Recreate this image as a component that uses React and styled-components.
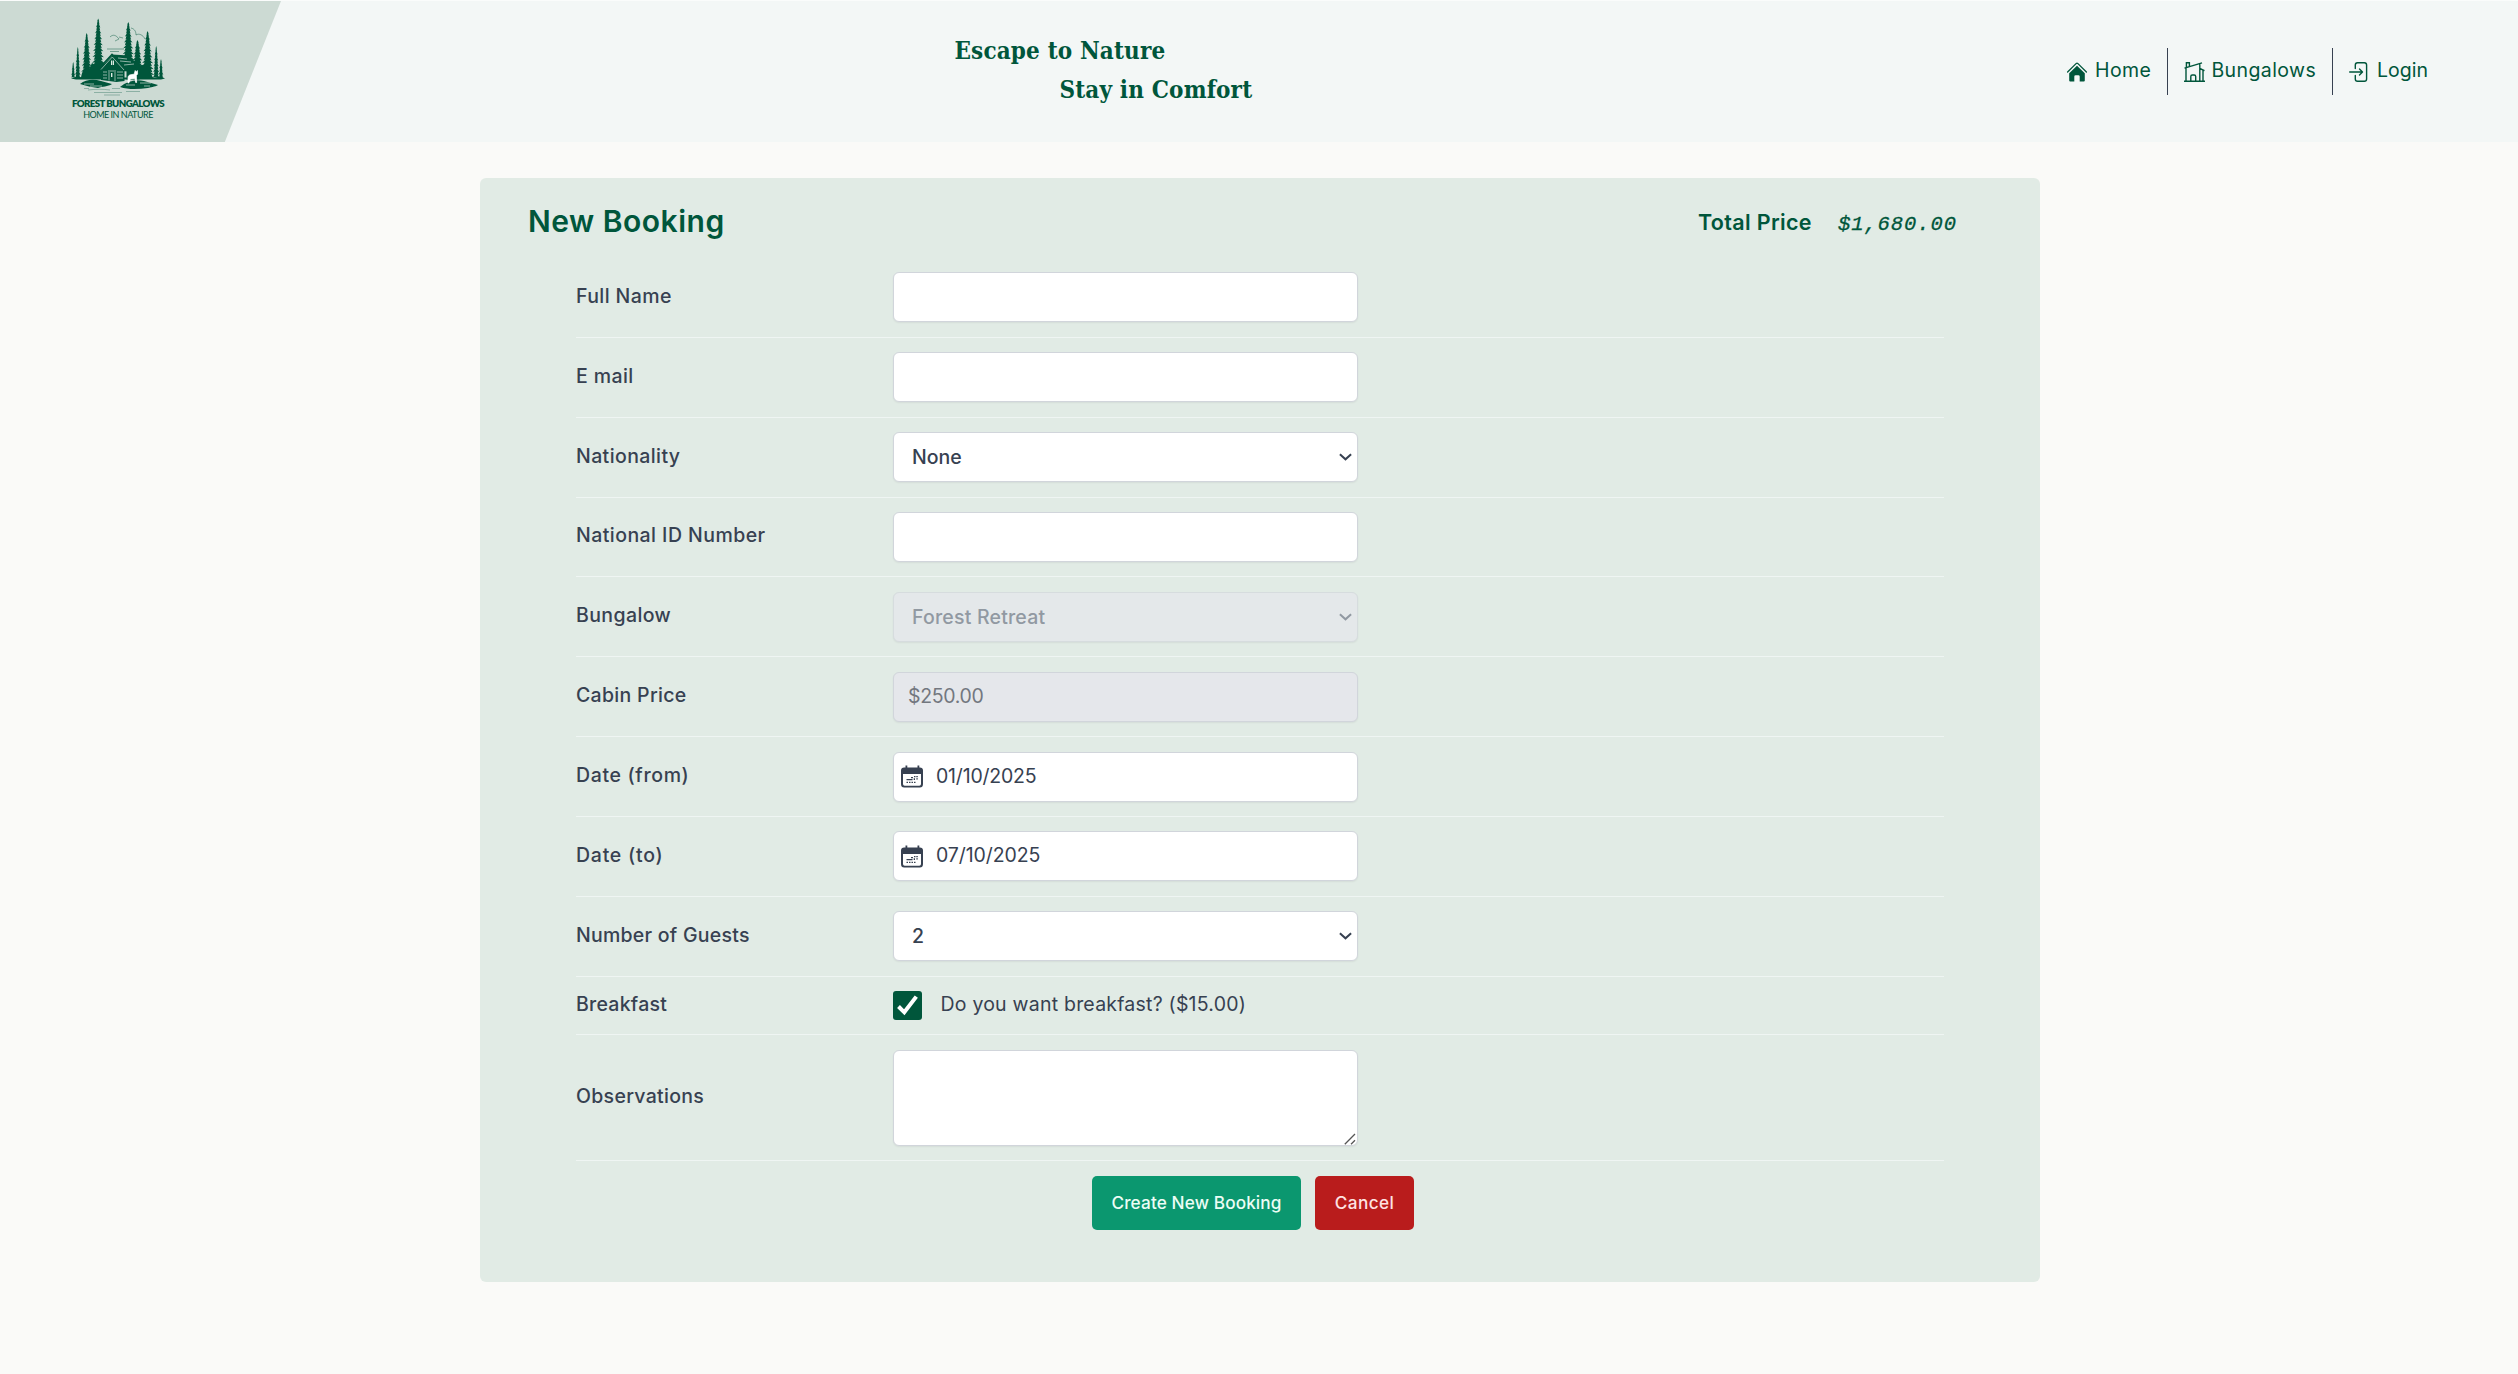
import React from "react";
import styled, { createGlobalStyle } from "styled-components";

const green = "#00563b";
const ink = "#374151";

const GlobalStyle = createGlobalStyle`
  *, *::before, *::after { box-sizing: border-box; }
  body {
    margin: 0;
    background: #fafaf8;
    color: ${ink};
    font-family: Inter, "Liberation Sans", sans-serif;
    font-size: 19.5px;
  }
  input, select, textarea, button { font-family: inherit; color: inherit; }
`;

const Page = styled.div`
  min-height: 1374px;
  display: flex;
  flex-direction: column;
`;

const Header = styled.header`
  height: 142px;
  border-top: 1px solid #fafcfb;
  background: #f3f7f6;
  display: grid;
  grid-template-columns: 281px 1fr auto;
`;

const Brand = styled.div`
  background: #ccdad3;
  clip-path: polygon(0 0, 100% 0, 80% 100%, 0 100%);
  padding: 13px 45px 0 0;
  display: flex;
  flex-direction: column;
  align-items: center;
  color: ${green};
  font-family: Lato, "Open Sans", sans-serif;
  white-space: nowrap;
`;

const BrandName = styled.div`
  margin-top: -1.5px;
  font-size: 9.7px;
  font-weight: 800;
  line-height: 12px;
  letter-spacing: -0.6px;
`;

const BrandTag = styled.div`
  font-size: 9px;
  line-height: 12px;
  letter-spacing: -0.5px;
`;

const Slogan = styled.div`
  padding: 30px 0 0 673px;
  color: ${green};
  font-family: "DejaVu Serif Condensed", "DejaVu Serif", serif;
  font-stretch: condensed;
  font-weight: 700;
  font-size: 24px;
  line-height: 39px;
  white-space: nowrap;
`;

const SloganLine = styled.div`
  padding-left: ${(p) => p.$indent}px;
  letter-spacing: 0.15px;
`;

const Nav = styled.nav`
  display: flex;
  align-items: center;
  padding: 0 90px 0 0;
  color: ${green};
`;

const NavItem = styled.a`
  height: 47px;
  display: flex;
  align-items: center;
  gap: ${(p) => p.$gap}px;
  padding: 0 ${(p) => p.$right}px 0 16px;
  border-right: ${(p) => (p.$last ? "none" : `1px solid ${ink}`)};
  letter-spacing: ${(p) => p.$track}px;
`;

const NavText = styled.span`
  padding-bottom: 4px;
`;

const Card = styled.main`
  width: 1560px;
  height: 1104px;
  margin: 36px 0 0 480px;
  padding: 17.6px 96px 0;
  border-radius: 6px;
  background: #e1ebe5;
`;

const CardHead = styled.div`
  height: 62.44px;
  margin: 0 -13px 0 -48px;
  padding-bottom: 8px;
  display: flex;
  align-items: center;
  justify-content: space-between;
  color: ${green};
`;

const Title = styled.h1`
  margin: 0;
  padding-bottom: 3px;
  font-size: 30px;
  font-weight: 600;
  letter-spacing: 0.5px;
`;

const Total = styled.div`
  display: flex;
  align-items: baseline;
  gap: 26px;
  font-size: 21.5px;
  font-weight: 600;
  letter-spacing: 0.35px;
`;

const Amount = styled.span`
  font: italic 400 20.5px "Liberation Mono", monospace;
  letter-spacing: 0.93px;
  -webkit-text-stroke: 0.3px ${green};
`;

const Row = styled.div`
  display: grid;
  grid-template-columns: 317px 465px;
  align-items: center;
  padding: 14.435px 0;
  border-bottom: 1px solid #eff5f3;
`;

const Label = styled.label`
  padding-bottom: 3px;
  font-weight: 460;
  letter-spacing: ${(p) => p.$track}px;
`;

const Field = styled.div`
  height: 50px;
  display: flex;
  align-items: center;
  padding: 0 5px 0 ${(p) => p.$left || 14}px;
  gap: 13px;
  border: 1px solid ${(p) => (p.$faded ? "#d6dcde" : "#d1d5db")};
  border-radius: 6px;
  background: ${(p) => (p.$faded ? "#e4e8ea" : p.$off ? "#e5e7eb" : "#fff")};
  box-shadow: 0 1px 2px rgba(0, 0, 0, 0.06);
`;

const Input = styled.input`
  flex: 1;
  min-width: 0;
  padding: 0 0 2px;
  border: 0;
  outline: 0;
  background: transparent;
  font-size: 19.5px;
  letter-spacing: ${(p) => p.$track || 0}px;
  &:disabled { color: #73777f; }
`;

const Select = styled.select`
  flex: 1;
  appearance: none;
  padding: 0;
  border: 0;
  background: transparent;
  font-size: 19.5px;
  font-weight: 500;
  letter-spacing: ${(p) => p.$track || 0}px;
  &:disabled { color: #9199a2; opacity: 1; }
`;

const TextBox = styled.div`
  position: relative;
  height: 96px;
`;

const TextArea = styled.textarea`
  display: block;
  width: 100%;
  height: 100%;
  resize: none;
  border: 1px solid #d1d5db;
  border-radius: 6px;
  background: #fff;
  box-shadow: 0 1px 2px rgba(0, 0, 0, 0.06);
`;

const Grip = styled.svg`
  position: absolute;
  right: 2px;
  bottom: 1px;
`;

const CheckLine = styled.div`
  height: 28.8px;
  display: flex;
  align-items: center;
  gap: 18.5px;
`;

const CheckBox = styled.span`
  width: 29px;
  height: 29px;
  border-radius: 3px;
  background: ${green};
`;

const CheckText = styled.span`
  padding-bottom: 3px;
  letter-spacing: 0.22px;
`;

const Actions = styled.div`
  display: flex;
  justify-content: center;
  gap: 14px;
  padding: 14.4px 14px 0 0;
`;

const Button = styled.button`
  width: ${(p) => p.$w}px;
  height: 54px;
  padding: 0 0 1px;
  border: 0;
  border-radius: 5px;
  background: ${(p) => (p.$danger ? "#b91c1c" : "#0b976f")};
  color: ${(p) => (p.$danger ? "#fee2e2" : "#ecfdf5")};
  font-size: 17.2px;
  font-weight: 500;
  letter-spacing: ${(p) => p.$track}px;
  white-space: nowrap;
`;

function pine(x, top, bottom, half) {
  const levels = Math.max(6, Math.round((bottom - top) / 3));
  const left = [];
  const right = [];
  for (let i = 1; i <= levels; i++) {
    const y = top + ((bottom - top) * i) / levels;
    const w = half * Math.pow(i / levels, 0.65) * (i % 2 ? 1 : 0.75);
    const inner = w * 0.55;
    right.push(`${x + w} ${y}`, `${x + inner} ${y - 0.5}`);
    left.unshift(`${x - inner} ${y - 0.8}`, `${x - w} ${y - 0.2}`);
  }
  return `M${x} ${top}L${right.join("L")}L${left.join("L")}Z`;
}

const pines = [
  [86.7, 33, 78, 6], [98.2, 18.5, 78, 7.5], [128.3, 22, 72, 7.5], [137.5, 40, 78, 7],
  [147.6, 31, 78, 7], [77.8, 47, 78, 3], [156.2, 46, 78, 3.4], [161, 59, 78, 2.6],
  [73.2, 62, 78, 2.2],
];

const LogoArt = () => (
  <svg width="104" height="84" viewBox="66 14 104 84" fill={green}>
    {pines.map((p) => <path key={p[0]} d={pine(...p)} />)}
    <g fill="none" stroke={green} strokeWidth="0.6" opacity="0.75">
      <path d="M110 37c3-3 6-2 9 2l-4 2M119 37l4 1M131 28c4 1 5 4 5 7c3-2 7 0 9 4M107 49h17M110 51.5h9" />
    </g>
    <path d="M81 78c1-8 4-10 8-9l3-6l5 3l5-4l4 3l6 13H82zM124 60l6 3l6-3l4 6l5-2l8 14l-1 1h-21z" />
    <path d="M71 78.5l6-2l6 1h72l6-1l4 2l-4 .9H76z" />
    <path d="M80 84c6-5 14-5 21-3l11 3c-4 3-10 2-14 4c-6-1-12-2-18-4zM120 87c7-6 16-8 24-6l14 4c-3 2-8 2-10 3c-9 1-19 2-28-1z" />
    <path d="M101 67l11.5-12l12 12.5V81l-8 1l-15.5-2z" />
    <path d="M112 54.5l17 1l11 11.5l-14 2.5z" />
    <path d="M98 69.5L112 54.5L126 69.8" fill="none" stroke={green} strokeWidth="1.6" />
    <g fill="none" stroke="#ccdad3" strokeWidth="0.7">
      <path d="M101 69.5L112.3 57L124 70M103 72h4M103 75h4M103 78h4M117 72h6M117 75h6M117 78h6M118 58l9 1M120 61l11 1M124 65l10-1" />
      <path d="M108 71h8M109 72v8.5M115 72v9M84 84h10M90 86h12M126 85h9M140 83h11M144 86h6" />
    </g>
    <path d="M111 60.5h1.2v4.5H111zM112.8 60.5h1.2v4.5h-1.2zM111 73h1.4v4H111zM128 72l3 0v3h-3z" fill="#dfeae4" />
    <path d="M126.500 69.500h13v10h-13z" />
    <path d="M135.200 70.500l1.200 1.500l1-1.500l.2 3.500l-1.200 1.500l.2 7h-.9l-.8-3.700l-4.500.2l-1.600 4h-.9l.2-6c.6-2 2-2.500 6-2.700z" fill="#fff" stroke="#fff" strokeWidth="0.7" />
    <path d="M88 90c8-1 15-1 22 0M94 92.500h28M112 88.500h8M104 95h16M84 88.500h5M126 91.500h14" fill="none" stroke={green} strokeWidth="0.7" opacity="0.45" />
  </svg>
);

const HomeIcon = () => (
  <svg width="20" height="20" viewBox="0 0 20 20">
    <path d="M.6 10L9.3 1.400q.7-.6 1.400 0L19.400 10" fill="none" stroke={green} strokeWidth="1.300" strokeLinecap="round" />
    <path d="M10 3.800L2.200 11.200V18.500q0 1 1 1h4.100v-5q0-1.300 1.300-1.300h2.800q1.300 0 1.300 1.300v5h4.100q1 0 1-1V11.200z" fill={green} />
  </svg>
);

const CabinIcon = () => (
  <svg width="21" height="20" viewBox="0 0 21 20" fill="none" stroke={green} strokeWidth="1.400">
    <path d="M0 19.200h21M2 19V5.500M.5 6.200L18 .8M2.400 5V.8h3v3.500M15.800 2v17M15.800 6.500l4.700 2.200M19 8.500V19M6.800 19v-4.500q0-1.500 1.500-1.500h1.900q1.500 0 1.500 1.500V19" />
  </svg>
);

const LoginIcon = () => (
  <svg width="19" height="20" viewBox="0 0 19 20" fill="none" stroke={green} strokeWidth="1.400" strokeLinecap="round" strokeLinejoin="round">
    <path d="M6.300 6.500V3q0-2.200 2.200-2.200h6.900Q17.600.8 17.600 3v14q0 2.200-2.200 2.200H8.500Q6.300 19.200 6.300 17v-3.500M.7 10h12.600M10.500 7l3 3l-3 3" />
  </svg>
);

const CalendarIcon = () => (
  <svg width="22" height="23" viewBox="0 0 22 23" fill={ink}>
    <path d="M4.500.5h1.800v3H4.500zM16.500.5h1.800v3h-1.800z" />
    <path d="M3.200 2.500h15.600Q22 2.500 22 5.500V19q0 3.500-3.200 3.500H3.200Q0 22.500 0 19V5.500q0-3 3.200-3zM2 9v10q0 1.700 1.700 1.700h14.600q1.700 0 1.700-1.700V9z" fillRule="evenodd" />
    <path d="M10 12h2v1.200h-2zM13 11h1.500v1.200H13zM15.300 11h1.500v1.200h-1.500zM5.500 14h6v1.200h-6zM12.700 13.200H14v1.800h-1.300zM15.300 13.200h1.500v1.300h-1.500zM5.500 16.700h1.500V18H5.500zM8 16.700h1.500V18H8zM10.500 16.700H12V18h-1.500zM13 16.700h1.500V18H13z" />
  </svg>
);

const Chevron = ({ color = ink }) => (
  <svg width="13" height="8" viewBox="0 0 13 8" fill="none" stroke={color} strokeWidth="2">
    <path d="M.9 1.200L6.500 6.300L12.100 1.200" />
  </svg>
);

const FormRow = ({ label, track = 0.4, children }) => (
  <Row>
    <Label $track={track}>{label}</Label>
    {children}
  </Row>
);

const DateField = ({ value, track }) => (
  <Field $left={7}>
    <CalendarIcon />
    <Input defaultValue={value} $track={track} />
  </Field>
);

export default function App() {
  return (
    <Page>
      <GlobalStyle />
      <Header>
        <Brand>
          <LogoArt />
          <BrandName>FOREST BUNGALOWS</BrandName>
          <BrandTag>HOME IN NATURE</BrandTag>
        </Brand>
        <Slogan>
          <SloganLine $indent={0.5}>Escape to Nature</SloganLine>
          <SloganLine $indent={105.5}>Stay in Comfort</SloganLine>
        </Slogan>
        <Nav>
          <NavItem $gap={8} $right={16} $track={0.45}><HomeIcon /><NavText>Home</NavText></NavItem>
          <NavItem $gap={6} $right={16} $track={0.4}><CabinIcon /><NavText>Bungalows</NavText></NavItem>
          <NavItem $gap={9} $right={0} $track={0} $last><LoginIcon /><NavText>Login</NavText></NavItem>
        </Nav>
      </Header>
      <Card>
        <CardHead>
          <Title>New Booking</Title>
          <Total><span>Total Price</span><Amount>$1,680.00</Amount></Total>
        </CardHead>
        <FormRow label="Full Name"><Field><Input /></Field></FormRow>
        <FormRow label="E mail"><Field><Input /></Field></FormRow>
        <FormRow label="Nationality">
          <Field $left={18}><Select><option>None</option></Select><Chevron /></Field>
        </FormRow>
        <FormRow label="National ID Number" track={0.45}><Field><Input /></Field></FormRow>
        <FormRow label="Bungalow">
          <Field $left={18} $faded>
            <Select disabled $track={0.2}><option>Forest Retreat</option></Select>
            <Chevron color="#9199a2" />
          </Field>
        </FormRow>
        <FormRow label="Cabin Price" track={0.3}>
          <Field $off><Input disabled defaultValue="$250.00" $track={-0.35} /></Field>
        </FormRow>
        <FormRow label="Date (from)" track={0.65}><DateField value="01/10/2025" track={-0.2} /></FormRow>
        <FormRow label="Date (to)" track={0.75}><DateField value="07/10/2025" track={-0.1} /></FormRow>
        <FormRow label="Number of Guests" track={0.25}>
          <Field $left={18}><Select><option>2</option></Select><Chevron /></Field>
        </FormRow>
        <FormRow label="Breakfast" track={0.25}>
          <CheckLine>
            <CheckBox>
              <svg width="29" height="29" viewBox="0 0 29 29" fill="none" stroke="#fff" strokeWidth="4">
                <path d="M5.500 15.500L11.300 21.300L23.300 5.600" />
              </svg>
            </CheckBox>
            <CheckText>Do you want breakfast? ($15.00)</CheckText>
          </CheckLine>
        </FormRow>
        <FormRow label="Observations" track={0.3}>
          <TextBox>
            <TextArea />
            <Grip width="12" height="12" viewBox="0 0 12 12" stroke="#555" strokeWidth="1.300">
              <path d="M.8 11.200L11 1M7 11.200L11 7.200" />
            </Grip>
          </TextBox>
        </FormRow>
        <Actions>
          <Button $w={209} $track={0.12}>Create New Booking</Button>
          <Button $w={99} $danger $track={0.4}>Cancel</Button>
        </Actions>
      </Card>
    </Page>
  );
}
